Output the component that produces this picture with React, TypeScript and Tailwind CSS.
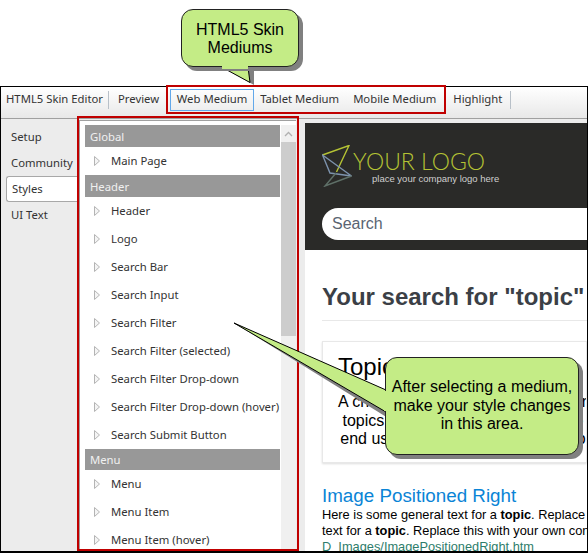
const ui = { fontFamily: '"Noto Sans", sans-serif' };
const arial = { fontFamily: '"Liberation Sans", sans-serif' };

function Tri() {
  return (
    <svg width="7" height="10" viewBox="0 0 7 10" className="shrink-0">
      <path d="M0.5 0.5 L5.5 5 L0.5 9.5 Z" fill="#f4f4f4" stroke="#b4b4b4" strokeWidth="1" />
    </svg>
  );
}

function Group({ title, h }: { title: string; h: string }) {
  return (
    <div className={`${h} bg-[#989898] text-[#f0f0f0] text-[11.3px] flex items-center pl-[5px] pt-[2px]`}>{title}</div>
  );
}

function Row({ label, h }: { label: string; h: string }) {
  return (
    <div className={`${h} flex items-center text-[11.3px] text-[#333] whitespace-nowrap`}>
      <span className="pl-[9px] w-[26px] shrink-0 flex"><Tri /></span>
      {label}
    </div>
  );
}

function Logo() {
  return (
    <svg width="32" height="42" viewBox="0 0 32 42" className="shrink-0">
      <path d="M0.5 10 L27 0.5 L14.5 27" fill="none" stroke="#b5c334" strokeWidth="1.4" />
      <path d="M0.5 10 L29.5 31 L8 28 Z" fill="none" stroke="#7d93ad" strokeWidth="1.4" />
      <path d="M14 28 L3 41 L29.5 31" fill="none" stroke="#5f7068" strokeWidth="1.4" />
    </svg>
  );
}

export default function App() {
  return (
    <div className="relative w-[588px] h-[553px] bg-white overflow-hidden" style={ui}>
      <div className="h-[86px]" />
      <div className="h-[467px] border border-b-2 border-black flex flex-col">
        <div className="h-[32px] shrink-0 bg-gradient-to-b from-[#ffffff] to-[#e8e8e8] border-b border-[#a0a0a0] flex items-center text-[11.3px] text-[#333] pb-[6px]">
          <span className="pl-[5px] pr-[5px]">HTML5 Skin Editor</span>
          <span className="w-px h-[18px] bg-[#b8c0c8]" />
          <span className="pl-[9px] pr-[7px]">Preview</span>
          <span className="w-px h-[18px] bg-[#b8c0c8]" />
          <span className="ml-[3px] h-[22px] w-[84px] border border-[#62a8ea] flex items-center justify-center">Web Medium</span>
          <span className="ml-[6px]">Tablet Medium</span>
          <span className="ml-[14px]">Mobile Medium</span>
          <span className="ml-[17px]">Highlight</span>
          <span className="ml-[8px] w-px h-[18px] bg-[#b8c0c8]" />
        </div>
        <div className="flex-1 min-h-0 flex bg-[#ececec]">
          <div className="w-[78px] shrink-0 pt-[5px] text-[11.3px] text-[#333]">
            <div className="h-[26px] pl-[10px] flex items-center">Setup</div>
            <div className="h-[26px] pl-[10px] flex items-center">Community</div>
            <div className="h-[26px] ml-[5px] pl-[5px] flex items-center bg-white border border-r-0 border-[#a8a8a8] rounded-l-[3px]">Styles</div>
            <div className="h-[26px] pl-[10px] flex items-center">UI Text</div>
          </div>
          <div className="w-[217px] shrink-0 mt-[1px] border-l border-t border-[#a0a0a0] bg-white pt-[4px] pl-[5px] flex overflow-hidden">
            <div className="w-[195px] shrink-0">
              <Group title="Global" h="h-[22px]" />
              <Row label="Main Page" h="h-[28px]" />
              <Group title="Header" h="h-[22px]" />
              <Row label="Header" h="h-[28px]" />
              <Row label="Logo" h="h-[28px]" />
              <Row label="Search Bar" h="h-[28px]" />
              <Row label="Search Input" h="h-[28px]" />
              <Row label="Search Filter" h="h-[28px]" />
              <Row label="Search Filter (selected)" h="h-[28px]" />
              <Row label="Search Filter Drop-down" h="h-[28px]" />
              <Row label="Search Filter Drop-down (hover)" h="h-[28px]" />
              <Row label="Search Submit Button" h="h-[28px]" />
              <Group title="Menu" h="h-[21px]" />
              <Row label="Menu" h="h-[28px]" />
              <Row label="Menu Item" h="h-[28px]" />
              <Row label="Menu Item (hover)" h="h-[28px]" />
            </div>
            <div className="ml-[1px] w-[15px] shrink-0 bg-[#f0f0f0] flex flex-col">
              <div className="h-[17px] flex items-center justify-center">
                <svg width="9" height="6" viewBox="0 0 9 6"><path d="M1 5 L4.5 1.5 L8 5" fill="none" stroke="#b0b0b0" strokeWidth="1.3" /></svg>
              </div>
              <div className="h-[194px] bg-[#cdcdcd]" />
            </div>
          </div>
          <div className="flex-1 min-w-0 ml-[9px] mt-[4px] bg-white overflow-hidden" style={arial}>
            <div className="h-[127px] bg-[#2a2a28] pt-[22px] pl-[17px] pr-0">
              <div className="flex h-[40px]">
                <Logo />
                <div className="relative">
                  <div className="text-[23px] leading-[26px] text-[#b5c334] ml-[-1px] mt-[3px] whitespace-nowrap" style={{ fontFamily: 'Lato, sans-serif', fontWeight: 300 }}>YOUR LOGO</div>
                  <div className="text-[9.5px] leading-[10px] text-[#cfcfcf] ml-[18px] whitespace-nowrap">place your company logo here</div>
                </div>
              </div>
              <div className="mt-[23px] h-[32px] bg-white rounded-l-[16px] flex items-center pl-[10px] text-[16px] text-[#5a6472]">Search</div>
            </div>
            <div className="pl-[17px]">
              <div className="mt-[33px] text-[24px] leading-[28px] font-bold text-[#3b3f46] whitespace-nowrap">Your search for "topic"</div>
              <div className="mt-[9px] h-px bg-[#e8e8e8]" />
              <div className="mt-[20px] h-[122px] border border-[#e8e8e8] shadow-[0_1px_2px_#ddd] pl-[15px] overflow-hidden whitespace-nowrap text-black">
                <div className="text-[24px] leading-[28px] mt-[11px]">Topic</div>
                <div className="text-[16px] leading-[18.5px] mt-[12px] w-[250px] text-center">
                  <div>A chart of your most important short</div>
                  <div>topics can be listed here, for more</div>
                  <div>end users of your new pages to go</div>
                </div>
              </div>
              <div className="mt-[22px] text-[18.8px] leading-[22px] text-[#0a84d6] whitespace-nowrap">Image Positioned Right</div>
              <div className="text-[12.8px] leading-[16px] text-black whitespace-nowrap">Here is some general text for a <b>topic</b>. Replace this with your own</div>
              <div className="text-[12.8px] leading-[16px] text-black whitespace-nowrap">text for a <b>topic</b>. Replace this with your own content.</div>
              <div className="text-[12.8px] leading-[16px] text-[#2e7d6b] whitespace-nowrap">D_Images/ImagePositionedRight.htm</div>
            </div>
          </div>
        </div>
      </div>

      <div className="absolute left-[166px] top-[85px] w-[280px] h-[29px] border-2 border-[#c00000]" />
      <div className="absolute left-[77px] top-[116px] w-[222px] h-[435px] border-2 border-[#c00000]" />

      <svg width="160" height="100" className="absolute left-[230px] top-[320px]" viewBox="0 0 160 100">
        <path d="M4 3 L158 74 L158 98 Z" fill="#808080" />
        <path d="M4 3 L156 70 L156 92 Z" fill="#c4ec86" stroke="#000" strokeWidth="1" />
      </svg>
      <div className="absolute left-[385px] top-[357px] w-[194px] h-[98px] bg-[#c4ec86] border border-[#222] rounded-[12px] shadow-[4px_4px_0_#808080] flex items-center justify-center text-center text-[16px] leading-[18.5px] text-black" style={arial}>
        <div>After selecting a medium,<br />make your style changes<br />in this area.</div>
      </div>
      <svg width="4" height="22" className="absolute left-[384px] top-[390px]" viewBox="0 0 4 22">
        <rect x="0" y="1" width="4" height="20" fill="#c4ec86" />
      </svg>

      <svg width="60" height="24" className="absolute left-[218px] top-[62px]" viewBox="0 0 60 24">
        <path d="M4 5 L36 23 L36 5 Z" fill="#808080" />
        <path d="M3.5 5 L32 20.5 L30 5 Z" fill="#c4ec86" stroke="#000" strokeWidth="1" />
      </svg>
      <div className="absolute left-[181px] top-[9px] w-[118px] h-[58px] bg-[#c4ec86] border border-[#222] rounded-[12px] shadow-[4px_4px_0_#808080] flex items-center justify-center text-center text-[16px] leading-[18px] text-black pt-[2px]" style={arial}>
        <div>HTML5 Skin<br />Mediums</div>
      </div>
      <svg width="26" height="4" className="absolute left-[222px] top-[65px]" viewBox="0 0 26 4">
        <rect x="0" y="0" width="26" height="4" fill="#c4ec86" />
      </svg>
    </div>
  );
}
